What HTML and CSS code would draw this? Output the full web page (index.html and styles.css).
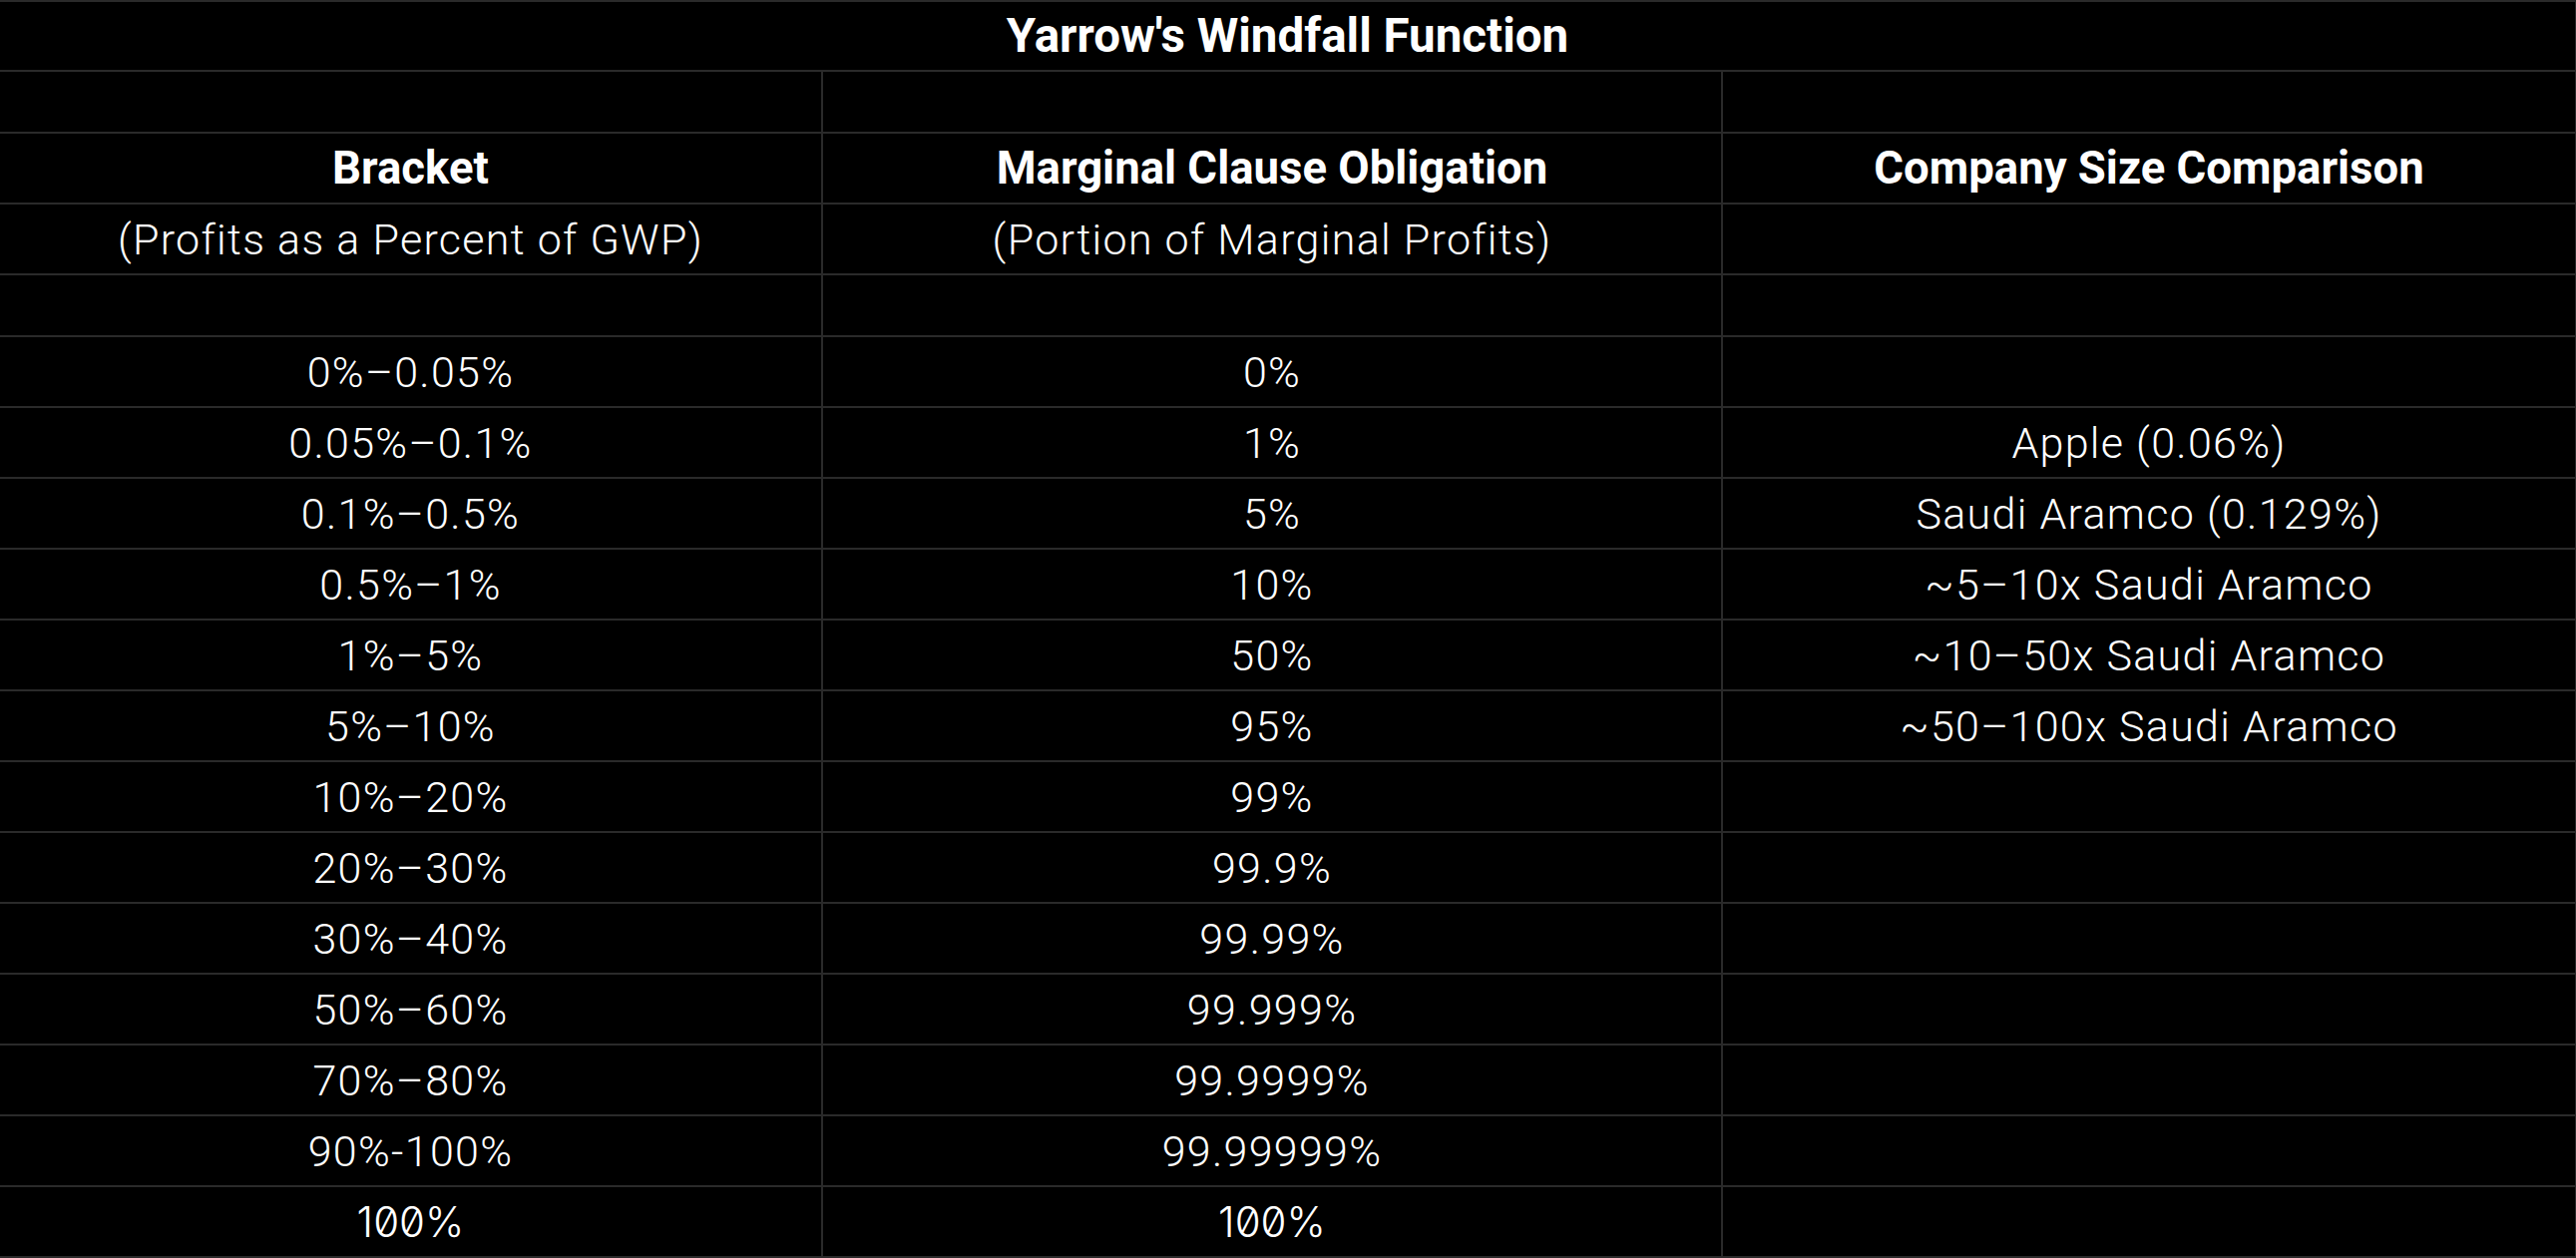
FILE: index.html
```html
<!DOCTYPE html>
<html>
<head>
<meta charset="utf-8">
<link rel="stylesheet" href="styles.css">
</head>
<body>
<table class="grid">
  <colgroup>
    <col class="c1"><col class="c2"><col class="c3">
  </colgroup>
  <tr class="r-title"><td colspan="3" class="head title">Yarrow's Windfall Function</td></tr>
  <tr class="r-gap"><td></td><td></td><td></td></tr>
  <tr class="r-row"><td class="head">Bracket</td><td class="head">Marginal Clause Obligation</td><td class="head">Company Size Comparison</td></tr>
  <tr class="r-row"><td>(Profits as a Percent of GWP)</td><td>(Portion of Marginal Profits)</td><td></td></tr>
  <tr class="r-gap"><td></td><td></td><td></td></tr>
  <tr class="r-row"><td>0%–0.05%</td><td>0%</td><td></td></tr>
  <tr class="r-row"><td>0.05%–0.1%</td><td>1%</td><td>Apple (0.06%)</td></tr>
  <tr class="r-row"><td>0.1%–0.5%</td><td>5%</td><td>Saudi Aramco (0.129%)</td></tr>
  <tr class="r-row"><td>0.5%–1%</td><td>10%</td><td>~5–10x Saudi Aramco</td></tr>
  <tr class="r-row"><td>1%–5%</td><td>50%</td><td>~10–50x Saudi Aramco</td></tr>
  <tr class="r-row"><td>5%–10%</td><td>95%</td><td>~50–100x Saudi Aramco</td></tr>
  <tr class="r-row"><td>10%–20%</td><td>99%</td><td></td></tr>
  <tr class="r-row"><td>20%–30%</td><td>99.9%</td><td></td></tr>
  <tr class="r-row"><td>30%–40%</td><td>99.99%</td><td></td></tr>
  <tr class="r-row"><td>50%–60%</td><td>99.999%</td><td></td></tr>
  <tr class="r-row"><td>70%–80%</td><td>99.9999%</td><td></td></tr>
  <tr class="r-row"><td>90%-100%</td><td>99.99999%</td><td></td></tr>
  <tr class="r-row"><td class="alt">100%</td><td class="alt">100%</td><td></td></tr>
</table>
</body>
</html>
```
FILE: styles.css
```css
html, body {
  margin: 0;
  padding: 0;
  background: #000;
}
.grid {
  width: 2582px;
  border-collapse: collapse;
  table-layout: fixed;
  color: #fff;
  font-family: Roboto, "Liberation Sans", sans-serif;
  font-weight: 300;
  font-size: 43px;
  letter-spacing: 1.3px;
}
.c1 { width: 824px; }
.c2 { width: 902px; }
.c3 { width: 856px; }
.grid td {
  border: 2px solid #2a2a2a;
  border-left: none;
  text-align: center;
  vertical-align: middle;
  padding: 0;
  white-space: nowrap;
}
.grid td + td { border-left: 2px solid #2a2a2a; }
.grid td:last-child { border-right: 2px solid #2a2a2a; }
.r-title td { height: 68px; }
.r-gap td { height: 60px; }
.r-row td { height: 69px; }
.head {
  font-weight: 700;
  font-size: 45.5px;
  letter-spacing: 0;
}
.title {
  font-size: 47.5px;
}
.alt {
  font-family: Inter, sans-serif;
  font-feature-settings: "zero" 1;
  font-weight: 300;
  font-size: 42px;
  letter-spacing: 0;
}
```
